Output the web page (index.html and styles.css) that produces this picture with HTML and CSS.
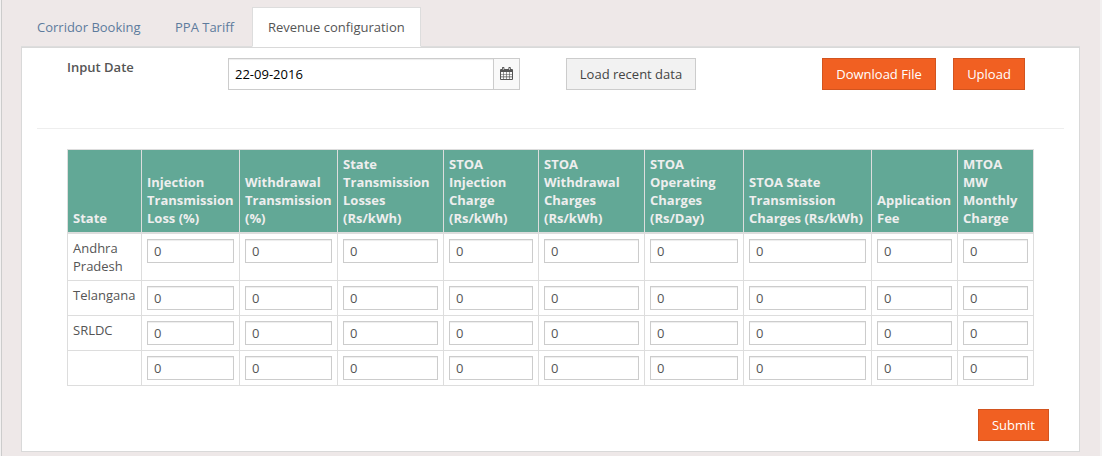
FILE: index.html
```html
<!DOCTYPE html>
<html lang="en">
<head>
<meta charset="utf-8">
<title>Revenue configuration</title>
<link rel="stylesheet" href="styles.css">
</head>
<body>
<div class="page">
  <nav class="tabs">
    <a class="tab">Corridor Booking</a>
    <a class="tab">PPA Tariff</a>
    <a class="tab tab-active">Revenue configuration</a>
  </nav>
  <main class="panel">
    <div class="toolbar">
      <label class="date-label" for="date">Input Date</label>
      <div class="date-group">
        <input class="date-input" id="date" type="text" value="22-09-2016">
        <span class="date-addon">
          <svg class="calendar" width="13" height="14" viewBox="0 0 13 14">
            <path fill="#555" fill-rule="evenodd" d="M1 2h1V.8Q2 0 2.8 0h.8q.8 0 .8.8V2h4V.8Q8.400 0 9.200 0h.8q.8 0 .8.8V2H12q1 0 1 1v9q0 1-1 1H1q-1 0-1-1V3q0-1 1-1zM1 5v2h2V5zM3.600 5v2h2.600V5zM6.800 5v2h2.600V5zM10 5v2h2V5zM1 7.600v2h2v-2zM3.600 7.600v2h2.600v-2zM6.800 7.600v2h2.600v-2zM10 7.600v2h2v-2zM1 10.200V12h2v-1.800zM3.600 10.200V12h2.600v-1.800zM6.800 10.200V12h2.600v-1.800zM10 10.200V12h2v-1.800zM2.900 1v2h.6V1zM9.300 1v2h.6V1z"/>
          </svg>
        </span>
      </div>
      <button class="btn btn-load">Load recent data</button>
      <button class="btn btn-primary btn-download">Download File</button>
      <button class="btn btn-primary btn-upload">Upload</button>
    </div>
    <hr class="divider">
    <table class="grid">
      <colgroup>
        <col class="c-state"><col class="c-loss"><col class="c-loss"><col class="c-wide"><col class="c-inj"><col class="c-wide"><col class="c-op"><col class="c-trans"><col class="c-app"><col class="c-mtoa">
      </colgroup>
      <thead>
        <tr>
          <th>State</th>
          <th>Injection<br>Transmission<br>Loss (%)</th>
          <th>Withdrawal<br>Transmission<br>(%)</th>
          <th>State<br>Transmission<br>Losses<br>(Rs/kWh)</th>
          <th>STOA<br>Injection<br>Charge<br>(Rs/kWh)</th>
          <th>STOA<br>Withdrawal<br>Charges<br>(Rs/kWh)</th>
          <th>STOA<br>Operating<br>Charges<br>(Rs/Day)</th>
          <th>STOA State<br>Transmission<br>Charges (Rs/kWh)</th>
          <th>Application<br>Fee</th>
          <th>MTOA<br>MW<br>Monthly<br>Charge</th>
        </tr>
      </thead>
      <tbody>
        <tr><td>Andhra<br>Pradesh</td><td><input class="cell" value="0"></td><td><input class="cell" value="0"></td><td><input class="cell" value="0"></td><td><input class="cell" value="0"></td><td><input class="cell" value="0"></td><td><input class="cell" value="0"></td><td><input class="cell" value="0"></td><td><input class="cell" value="0"></td><td><input class="cell" value="0"></td></tr>
        <tr><td>Telangana</td><td><input class="cell" value="0"></td><td><input class="cell" value="0"></td><td><input class="cell" value="0"></td><td><input class="cell" value="0"></td><td><input class="cell" value="0"></td><td><input class="cell" value="0"></td><td><input class="cell" value="0"></td><td><input class="cell" value="0"></td><td><input class="cell" value="0"></td></tr>
        <tr><td>SRLDC</td><td><input class="cell" value="0"></td><td><input class="cell" value="0"></td><td><input class="cell" value="0"></td><td><input class="cell" value="0"></td><td><input class="cell" value="0"></td><td><input class="cell" value="0"></td><td><input class="cell" value="0"></td><td><input class="cell" value="0"></td><td><input class="cell" value="0"></td></tr>
        <tr><td></td><td><input class="cell" value="0"></td><td><input class="cell" value="0"></td><td><input class="cell" value="0"></td><td><input class="cell" value="0"></td><td><input class="cell" value="0"></td><td><input class="cell" value="0"></td><td><input class="cell" value="0"></td><td><input class="cell" value="0"></td><td><input class="cell" value="0"></td></tr>
      </tbody>
    </table>
    <div class="actions">
      <button class="btn btn-primary btn-submit">Submit</button>
    </div>
  </main>
</div>
</body>
</html>
```

FILE: styles.css
```css
* { box-sizing: border-box; }

body {
  margin: 0;
  height: 460px;
  overflow: hidden;
  background: #fff;
  color: #555;
  font: 13px/18px "Open Sans", "Liberation Sans", sans-serif;
}

input, button { font: inherit; margin: 0; }

.page {
  height: 456px;
  margin: 0 2px 0 1px;
  padding: 7px 20px 0 19px;
  border-left: 1px solid #ccc;
  background: #eee8e8;
  box-shadow: 0 0 0 2px #f3f1f1;
  clip-path: inset(0 -2px 0 -1px);
}

.tabs {
  display: flex;
  height: 40px;
  border-bottom: 1px solid #ddd;
}

.tab {
  height: 40px;
  padding: 11px 16px 0;
  margin-right: 2px;
  color: #5d7b9d;
}

.tab:first-child { width: 136px; }
.tab:nth-child(2) { width: 91px; }

.tab-active {
  width: 169px;
  padding: 10px 15px 0;
  border: 1px solid #ddd;
  border-bottom-color: #fff;
  background: #fff;
  color: #555;
}

.panel {
  height: 405px;
  padding: 10px 15px 0;
  border: 1px solid #d9d9d9;
  background: #fff;
}

.toolbar {
  display: flex;
  height: 70px;
  padding-left: 30px;
}

.date-label {
  width: 161px;
  font-weight: 600;
}

.date-group {
  display: flex;
  width: 292px;
  height: 32px;
  border: 1px solid #ccc;
}

.date-input {
  flex: 1;
  min-width: 0;
  padding: 0 6px;
  border: 0;
  background: #fff;
  color: #000;
  box-shadow: inset 0 1px 1px rgba(0, 0, 0, .075);
}

.date-addon {
  display: flex;
  width: 26px;
  padding: 8px 0 0 6px;
  border-left: 1px solid #ccc;
  background: #f9f9f9;
}

.btn {
  height: 32px;
  padding: 0;
  border: 1px solid #ccc;
  line-height: 18px;
  text-align: center;
  white-space: nowrap;
}

.btn-load {
  width: 130px;
  margin-left: 46px;
  background: #f2f2f2;
  color: #444;
}

.btn-primary {
  border-color: #d2541f;
  background: #f16022;
  color: #fff;
  font-weight: 500;
}

.btn-download { width: 114px; margin-left: 126px; }
.btn-upload { width: 72px; margin-left: 17px; }
.btn-submit { width: 71px; }

.divider {
  height: 1px;
  margin: 0 0 20px;
  border: 0;
  background: #eee;
}

.grid {
  width: 967px;
  margin-left: 30px;
  table-layout: fixed;
  border-spacing: 0;
  border: solid #ddd;
  border-width: 1px 0 0 1px;
}

.c-state { width: 74px; }
.c-loss { width: 98px; }
.c-wide { width: 106px; }
.c-inj { width: 95px; }
.c-op { width: 99px; }
.c-trans { width: 128px; }
.c-app { width: 86px; }
.c-mtoa { width: 76px; }

.grid th,
.grid td {
  padding: 5px;
  border: solid #ddd;
  border-width: 0 1px 1px 0;
  text-align: left;
  vertical-align: top;
  white-space: nowrap;
}

.grid th {
  border-bottom-width: 2px;
  background: #62a896;
  color: #eee;
  font-weight: 700;
  vertical-align: bottom;
}

.cell {
  display: block;
  width: 100%;
  height: 24px;
  padding: 0 6px;
  border: 1px solid #ccc;
  background: #fff;
  color: #555;
  box-shadow: inset 0 1px 1px rgba(0, 0, 0, .075);
}

.actions {
  display: flex;
  justify-content: flex-end;
  padding: 23px 15px 0 0;
}
```
